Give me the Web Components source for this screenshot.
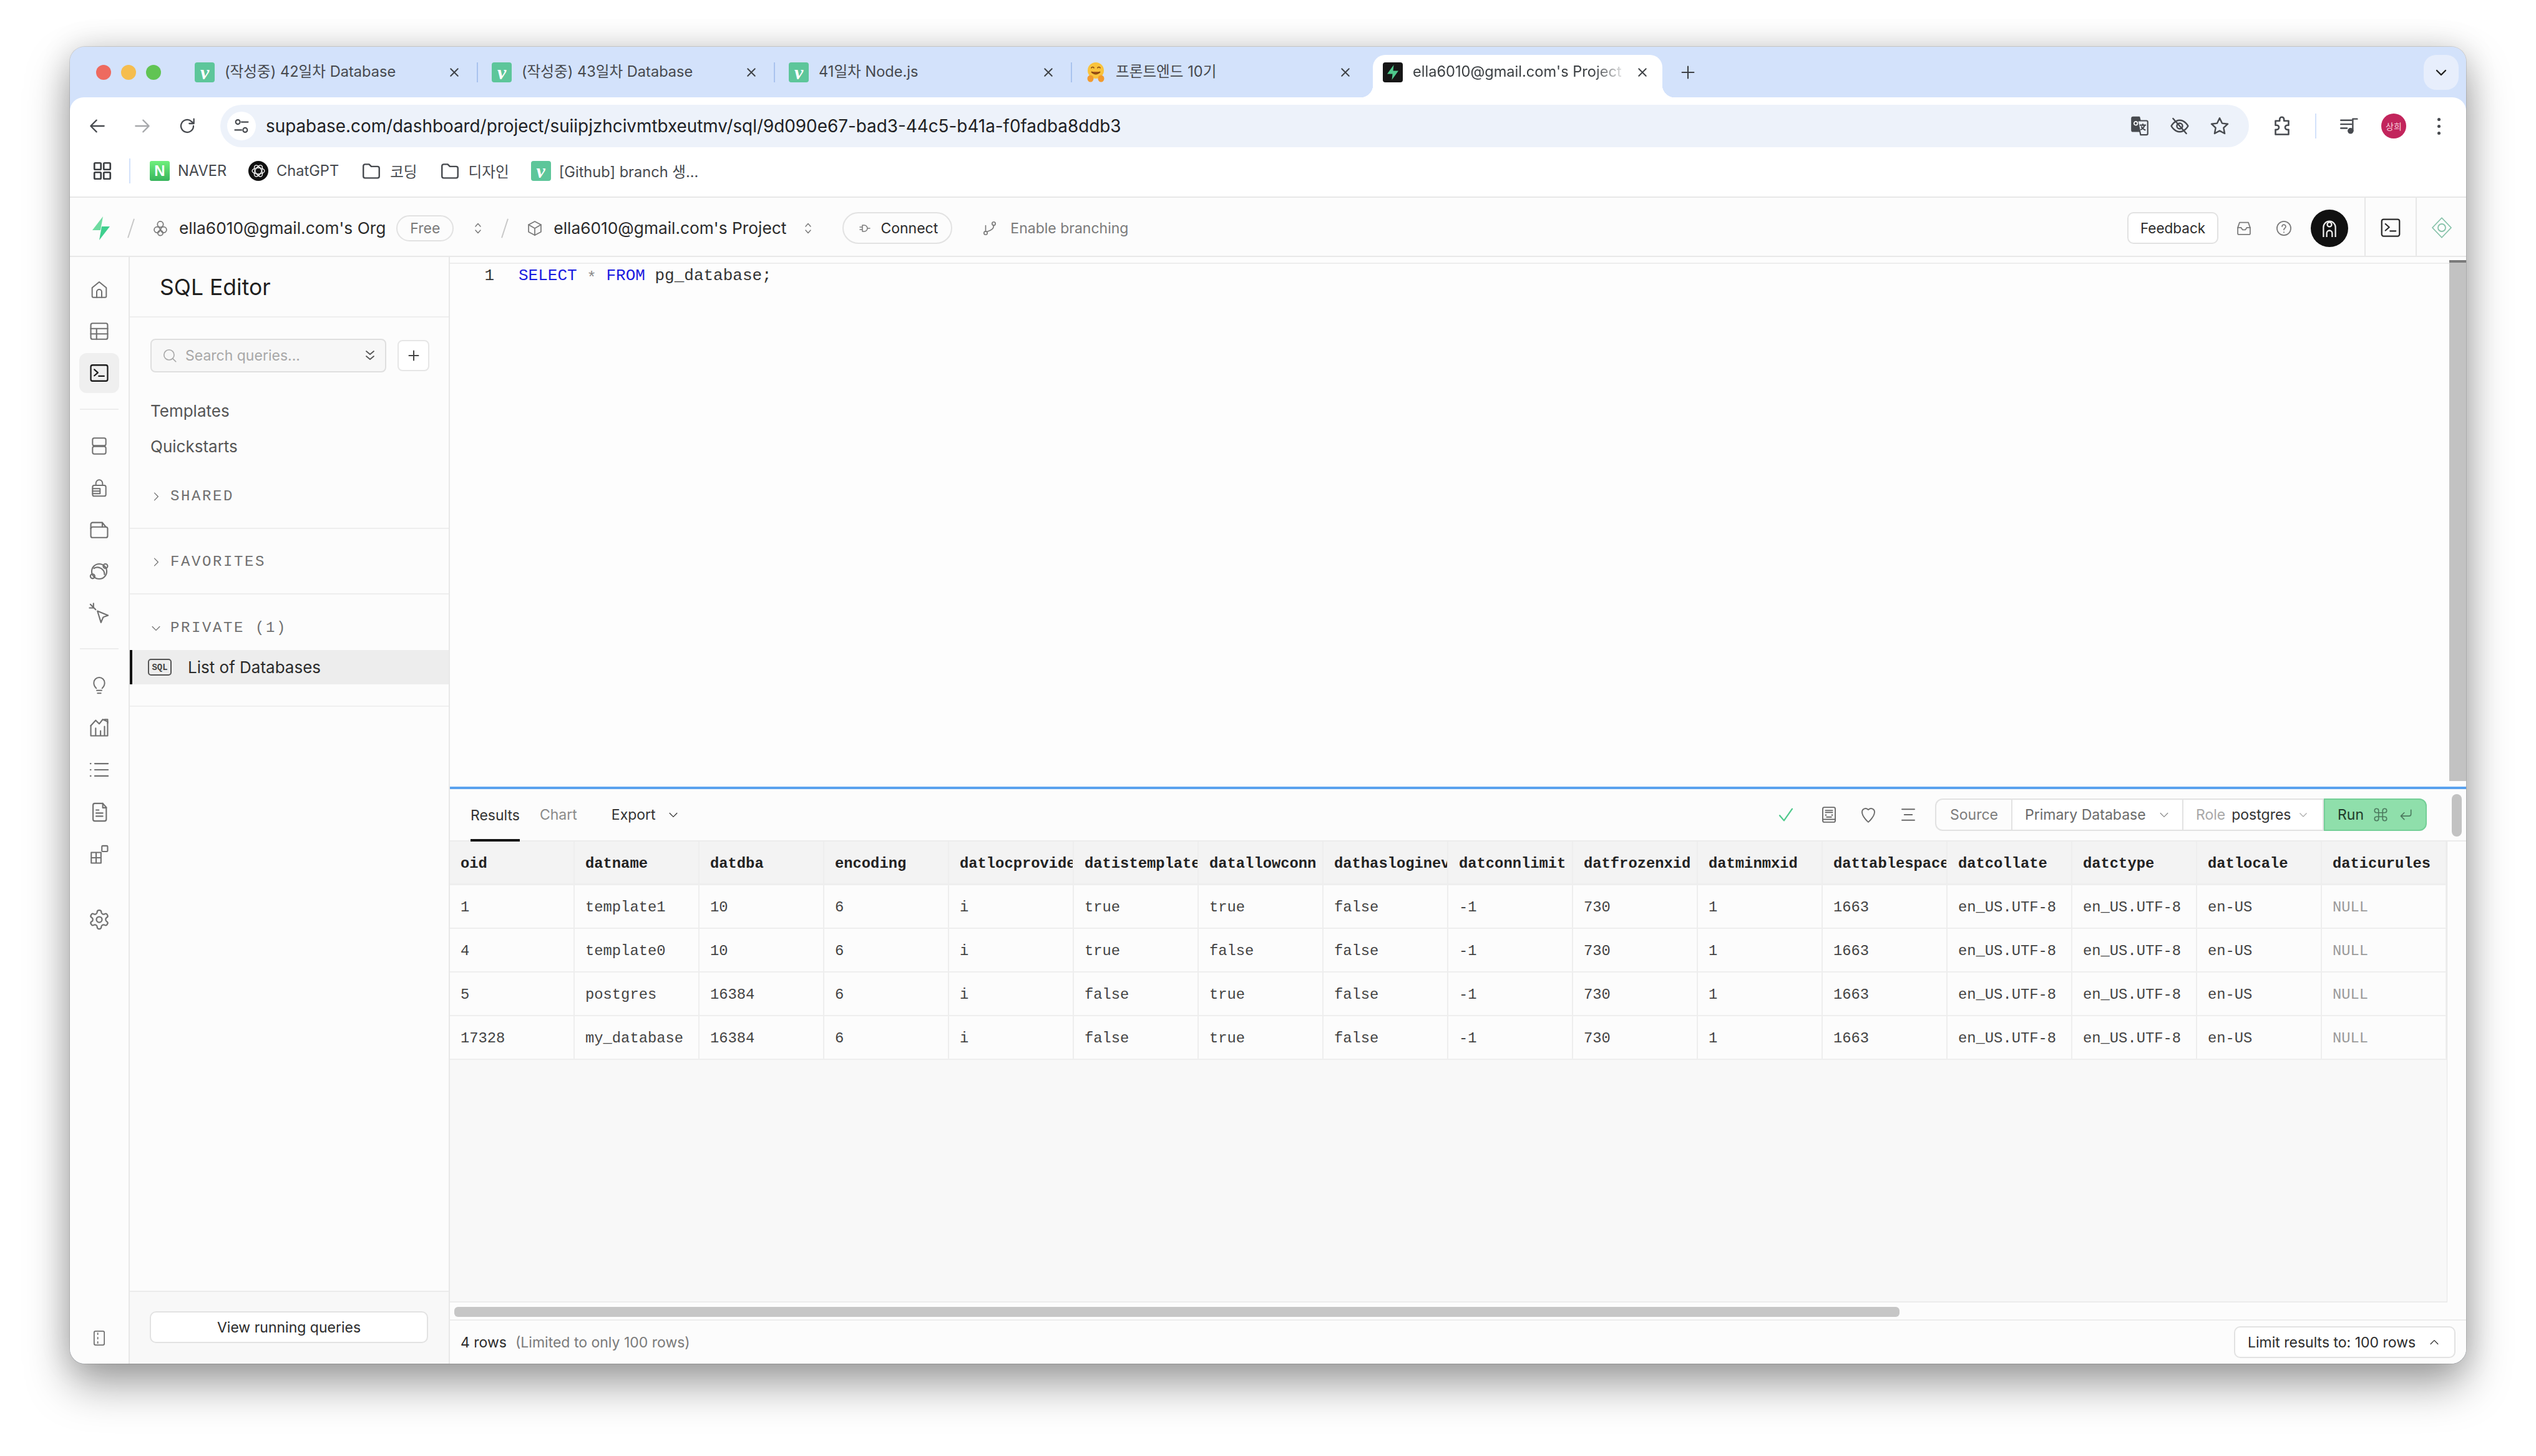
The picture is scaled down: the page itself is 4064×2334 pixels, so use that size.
<!DOCTYPE html>
<html lang="ko">
<head>
<meta charset="utf-8">
<title>SQL Editor</title>
<style>
  html, body { margin: 0; background: #fff; }
  body { font-family: Inter, "Noto Sans CJK KR", sans-serif; }
</style>
</head>
<body>
<browser-window>
  <chrome-tabs></chrome-tabs>
  <chrome-toolbar></chrome-toolbar>
  <chrome-bookmarks></chrome-bookmarks>
  <dash-header></dash-header>
  <dash-body>
    <icon-rail></icon-rail>
    <query-sidebar></query-sidebar>
    <sql-workspace>
      <sql-editor></sql-editor>
      <results-toolbar></results-toolbar>
      <result-grid></result-grid>
      <results-footer></results-footer>
    </sql-workspace>
  </dash-body>
</browser-window>

<script>
// ICONS
// stroke icons on a 24 box, they take their colour from the element
const ICONS = {
  home: '<path d="M3.5 10 12 3l8.500 7v10a1.500 1.500 0 0 1-1.500 1.500H5A1.500 1.500 0 0 1 3.500 20z"/><path d="M9 21.500V15a3 3 0 0 1 6 0v6.500"/>',
  table: '<rect x="2.500" y="3" width="19" height="18" rx="2"/><path d="M2.500 9h19M2.500 15h19M9 9v12"/>',
  terminal: '<rect x="2.500" y="3" width="19" height="18" rx="2"/><path d="m6.500 8 4 3.500-4 3.500M11.500 15.500h6"/>',
  database: '<rect x="4" y="2.500" width="16" height="9" rx="2"/><rect x="4" y="12.500" width="16" height="9" rx="2"/>',
  lock: '<path d="M8 9V6.500a4 4 0 0 1 8 0V9"/><rect x="4" y="9" width="16" height="13" rx="2"/><path d="M4 13h9v6H4M4 16h9"/>',
  storage: '<path d="M2.500 11a2 2 0 0 1 2-2h15a2 2 0 0 1 2 2v8a2 2 0 0 1-2 2h-15a2 2 0 0 1-2-2z"/><path d="M2.500 11V6a2 2 0 0 1 2-2h11l4 5M15.500 4v5"/>',
  realtime: '<circle cx="12" cy="12" r="8.500"/><path d="M6 8.500a8 8 0 0 1 12 7"/><circle cx="19" cy="6" r="2.500"/><circle cx="4.500" cy="17.500" r="2.500"/>',
  cursor: '<path d="m10 9.500 12 5-5.500 2-2.500 6z"/><path d="M2 2l6 6M5.500 1v4M1 6h4"/>',
  bulb: '<path d="M8.500 16C6.500 14 5.500 12 5.500 9.500a6.500 6.500 0 0 1 13 0c0 2.500-1 4.500-3 6.500"/><path d="M9 18.500h6M10 22h4"/>',
  chart: '<path d="M2.500 10 8 4l4 4 4-5 5.500 2.500M18 3h3.500v4"/><path d="M2.500 10v11.500h19V5.500M8 13v8.500M13.500 16v5.500M18 11v10.500"/>',
  list: '<path d="M7 5h15M7 12h15M7 19h15M2 5h.5M2 12h.5M2 19h.5"/>',
  doc: '<path d="M5 4a2 2 0 0 1 2-2h9l4 4.500V20a2 2 0 0 1-2 2H7a2 2 0 0 1-2-2z"/><path d="M16 2v5h4M8.500 9.500h3M8.500 13h7.500M8.500 16.500h7.500"/>',
  apps: '<path d="M3 9.500h11v12H3zM3 15.500h11M8.500 9.500v12"/><rect x="15" y="2" width="6.500" height="6.500" rx="1"/>',
  gear: '<path d="M12.220 2h-.440a2 2 0 0 0-2 2v.180a2 2 0 0 1-1 1.730l-.430.250a2 2 0 0 1-2 0l-.150-.080a2 2 0 0 0-2.730.730l-.220.380a2 2 0 0 0 .730 2.730l.150.100a2 2 0 0 1 1 1.720v.510a2 2 0 0 1-1 1.740l-.150.090a2 2 0 0 0-.730 2.730l.220.380a2 2 0 0 0 2.730.730l.150-.080a2 2 0 0 1 2 0l.430.250a2 2 0 0 1 1 1.730V20a2 2 0 0 0 2 2h.440a2 2 0 0 0 2-2v-.180a2 2 0 0 1 1-1.730l.430-.250a2 2 0 0 1 2 0l.150.080a2 2 0 0 0 2.730-.730l.220-.390a2 2 0 0 0-.730-2.730l-.150-.080a2 2 0 0 1-1-1.740v-.500a2 2 0 0 1 1-1.740l.150-.090a2 2 0 0 0 .730-2.730l-.220-.380a2 2 0 0 0-2.730-.730l-.150.080a2 2 0 0 1-2 0l-.430-.250a2 2 0 0 1-1-1.730V4a2 2 0 0 0-2-2z"/><circle cx="12" cy="12" r="3"/>',
  panel: '<rect x="5" y="2.500" width="14" height="19" rx="2"/><path d="M10 5v2M10 11v2M10 17v2"/>',
  search: '<circle cx="11" cy="11" r="7.500"/><path d="m21 21-4.500-4.500"/>',
  chevrons: '<path d="m6 5 6 5 6-5M6 13l6 5 6-5"/>',
  plus: '<path d="M12 4.500v15M4.500 12h15"/>',
  right: '<path d="m9 5 7 7-7 7"/>',
  down: '<path d="m5 9 7 7 7-7"/>',
  up: '<path d="m5 15 7-7 7 7"/>',
  updown: '<path d="m8 9 4-4.500L16 9M8 15l4 4.500 4-4.500"/>',
  back: '<path d="M20 12H4.500M11 5l-7 7 7 7"/>',
  forward: '<path d="M4 12h15.500M13 5l7 7-7 7"/>',
  reload: '<path d="M19.500 12a7.500 7.500 0 1 1-2.500-5.600L20 9M20 3.500V9h-5.500"/>',
  tune: '<circle cx="7" cy="6.500" r="3"/><path d="M12 6.500h9M3 17.500h9"/><circle cx="17" cy="17.500" r="3"/>',
  translate: '<path d="M3 3.500A1.500 1.500 0 0 1 4.500 2h7l4 16H4.500A1.500 1.500 0 0 1 3 16.500z" fill="currentColor"/><path d="M9.500 6h10A1.500 1.500 0 0 1 21 7.500v13a1.500 1.500 0 0 1-1.500 1.500H13l-3.500-16z" fill="#edf2fa"/><path d="M12.500 11h6M15.500 10v1M17.500 11c-.5 2-2 4-4 5M14 13c.7 1.300 2.500 3 4 3.500"/><circle cx="7.500" cy="9" r="2" stroke="#fff" stroke-width="1.200"/>',
  star: '<path d="m12 3 2.800 5.900 6.400.800-4.700 4.400 1.200 6.400L12 17.400l-5.700 3.100 1.200-6.400L2.800 9.700l6.400-.800z"/>',
  eyeoff: '<path d="M2.500 12S6 5.500 12 5.500 21.500 12 21.500 12 18 18.500 12 18.500 2.500 12 2.500 12z"/><circle cx="12" cy="12" r="3.200"/><path d="m4.500 3.500 15 17"/>',
  puzzle: '<path d="M5 6.500h4.500V4.800a2.300 2.300 0 0 1 4.600 0v1.700H19v4.600h-1.300a2.400 2.400 0 0 0 0 4.800H19v5.100H5v-5.100h1.300a2.400 2.400 0 0 0 0-4.800H5z"/>',
  media: '<path d="M3 5.500h12M3 10h12M3 14.500h7"/><path d="M16.500 17.500V4h5"/><circle cx="14" cy="17.500" r="2.500" fill="currentColor"/>',
  grid: '<rect x="3.500" y="3.500" width="7" height="7" rx="1"/><rect x="13.500" y="3.500" width="7" height="7" rx="1"/><rect x="3.500" y="13.500" width="7" height="7" rx="1"/><rect x="13.500" y="13.500" width="7" height="7" rx="1"/>',
  folder: '<path d="M3 6.500a2 2 0 0 1 2-2h4.500l2.500 2.500h7a2 2 0 0 1 2 2V18a2 2 0 0 1-2 2H5a2 2 0 0 1-2-2z"/>',
  org: '<circle cx="12" cy="6.500" r="4"/><circle cx="7.500" cy="14" r="4"/><circle cx="16.500" cy="14" r="4"/><circle cx="12" cy="18.500" r="3.500"/>',
  box: '<path d="M12 2.500 20.500 7v10L12 21.500 3.500 17V7z"/><path d="M3.500 7 12 12l8.500-5M12 12v9.500"/>',
  plug: '<path d="M9 7v10h3a5 5 0 0 0 0-10zM9 10H5M9 14H5M17 12h4"/>',
  branch: '<circle cx="18" cy="5" r="2.500"/><circle cx="6" cy="19" r="2.500"/><path d="M6 16.500V8M18 7.500c0 6-5 7.500-10 9.500"/>',
  inbox: '<path d="M3.500 11 6 4h12l2.500 7v8a1.500 1.500 0 0 1-1.500 1.500H5A1.500 1.500 0 0 1 3.500 19z"/><path d="M3.500 11H8l2 3h4l2-3h4.500"/>',
  help: '<circle cx="12" cy="12" r="9.500"/><path d="M9.500 9.500a2.500 2.500 0 1 1 4 2c-1 .7-1.500 1.200-1.500 2.500M12 17.200v.3"/>',
  diamond: '<path d="M12 1.500 22 12 12 22.500 2 12z"/><circle cx="12" cy="12" r="4"/>',
  check: '<path d="m4 13 5.500 6.500L20 4.500"/>',
  keyboard: '<rect x="4" y="2.500" width="16" height="19" rx="2"/><path d="M7.500 6.500h9M7.500 9h9M9 15h6M4 18h16M8 12v1M16 12v1"/>',
  heart: '<path d="M12 21.500S4 14.500 4 8.500a4.500 4.500 0 0 1 8-2.800 4.500 4.500 0 0 1 8 2.800c0 6-8 13-8 13z"/>',
  lines: '<path d="M4 5h16M7 12h10M4 19h16"/>',
  enter: '<path d="M20 5v6a3 3 0 0 1-3 3H5M10 9l-5 5 5 5"/>',
  cmd: '<path d="M9 9h6v6H9zM9 9V6a3 3 0 1 0-3 3zM15 9V6a3 3 0 1 1 3 3zM9 15v3a3 3 0 1 1-3-3zM15 15v3a3 3 0 1 0 3-3z"/>',
};

// every element here gets its markup the same way
const define = (tag, html) => {
  customElements.define(tag, class extends HTMLElement {
    constructor() {
      super();
      this.attachShadow({ mode: 'open' }).innerHTML = html;
    }
  });
};

class UiIcon extends HTMLElement {
  connectedCallback() {
    const size = this.getAttribute('size') || 24;
    const weight = this.getAttribute('weight') || 1.500;
    this.attachShadow({ mode: 'open' }).innerHTML = `
      <style>:host { display: inline-flex; flex: none; line-height: 0; }</style>
      <svg width="${size}" height="${size}" viewBox="0 0 24 24" fill="none" stroke="currentColor"
        stroke-width="${weight}" stroke-linecap="round" stroke-linejoin="round">${ICONS[this.getAttribute('name')]}</svg>`;
  }
}
customElements.define('ui-icon', UiIcon);

// WINDOW
define('browser-window', `
<style>
  :host { display: block; box-sizing: border-box; width: 4064px; height: 2334px; padding: 75px 112px 148px; overflow: hidden; }
  .frame { display: flex; flex-direction: column; height: 100%; background: #d3e2fb; border-radius: 24px;
    box-shadow: 0 0 0 1px rgba(0,0,0,.12), 0 34px 70px rgba(0,0,0,.36), 0 0 50px rgba(0,0,0,.14); overflow: hidden; }
</style>
<div class="frame"><slot></slot></div>`);

// FAVICONS
define('fav-vue', `
<style>
  :host { display: inline-flex; flex: none; width: 32px; height: 32px; border-radius: 4px; background: #5dc69a;
    align-items: center; justify-content: center; color: #fff;
    font: italic bold 32px/30px "Liberation Serif", serif; }
</style><span>v</span>`);

define('fav-naver', `
<style>
  :host { display: inline-flex; flex: none; width: 32px; height: 32px; border-radius: 3px;
    background: linear-gradient(#6ff07c, #37b45c); align-items: center; justify-content: center; color: #fff;
    font: bold 24px/32px "Liberation Sans", sans-serif; }
</style><span>N</span>`);

define('fav-gpt', `
<style>
  :host { display: inline-flex; flex: none; line-height: 0; }
</style>
<svg width="32" height="32" viewBox="0 0 32 32" fill="none" stroke="#fff" stroke-width="1.300">
  <circle cx="16" cy="16" r="16" fill="#111" stroke="none"/>
  <ellipse cx="16" cy="16" rx="10" ry="5"/>
  <ellipse cx="16" cy="16" rx="10" ry="5" transform="rotate(60 16 16)"/>
  <ellipse cx="16" cy="16" rx="10" ry="5" transform="rotate(120 16 16)"/>
</svg>`);

define('fav-supabase', `
<style>
  :host { display: inline-flex; flex: none; line-height: 0; }
</style>
<svg width="32" height="32" viewBox="0 0 32 32">
  <rect width="32" height="32" rx="4" fill="#161616"/>
  <path d="M17.500 4 7 18.500h8.500L14.500 28 25 13.500h-8.500z" fill="#4fc98c"/>
</svg>`);

define('fav-hug', `
<style>
  :host { display: inline-flex; flex: none; line-height: 0; }
</style>
<svg width="32" height="32" viewBox="0 0 32 32">
  <circle cx="16" cy="13" r="13" fill="#f9c33d"/>
  <path d="M9 9.500a2 2 0 0 1 4 0M19 9.500a2 2 0 0 1 4 0" stroke="#8a4a12" stroke-width="1.600" fill="none"/>
  <path d="M9 15q7 7 14 0" stroke="#8a4a12" stroke-width="1.800" fill="#a5561a"/>
  <ellipse cx="7.500" cy="26" rx="5" ry="5.500" fill="#f29a2e"/>
  <ellipse cx="24.500" cy="26" rx="5" ry="5.500" fill="#f29a2e"/>
</svg>`);

// TAB STRIP
customElements.define('browser-tab', class extends HTMLElement {
  constructor() {
    super();
    this.attachShadow({ mode: 'open' }).innerHTML = `
    <style>
      :host { display: flex; position: relative; box-sizing: border-box; flex: none; width: 476px; height: 68px;
        align-items: center; padding: 0 22px 12px; color: #46494e; font-size: 23.600px; }
      :host([sep])::after { content: ""; position: absolute; right: 0; top: 12px; width: 2px; height: 32px; background: #a9c3ee; }
      :host([active]) { color: #3c4043; }
      :host([active]) .bg { display: block; }
      .bg { display: none; position: absolute; left: 6px; right: 6px; top: 0; bottom: 0; background: #fff; border-radius: 20px 20px 0 0; }
      .bg::before, .bg::after { content: ""; position: absolute; bottom: 0; width: 20px; height: 20px; }
      .bg::before { left: -20px; background: radial-gradient(circle at 0 0, transparent 20px, #fff 20.5px); }
      .bg::after { right: -20px; background: radial-gradient(circle at 100% 0, transparent 20px, #fff 20.5px); }
      ::slotted([slot=icon]) { position: relative; }
      .title { position: relative; flex: 1; margin-left: 16px; white-space: nowrap; overflow: hidden; line-height: 30px; padding-bottom: 3px; }
      :host([active]) .title { margin-right: 8px; -webkit-mask-image: linear-gradient(90deg, #000 84%, transparent); mask-image: linear-gradient(90deg, #000 84%, transparent); }
      .close { position: relative; width: 32px; display: flex; justify-content: center; color: #3e4145; }
    </style>
    <div class="bg"></div>
    <slot name="icon"></slot>
    <div class="title"><slot></slot></div>
    <div class="close"><ui-icon name="plus" size="26" weight="1.800" style="transform: rotate(45deg)"></ui-icon></div>`;
  }
});

define('chrome-tabs', `
<style>
  :host { display: flex; flex: none; height: 81px; box-sizing: border-box; padding: 13px 12px 0 178px; align-items: flex-start; background: #d3e2fb; position: relative; }
  .lights { position: absolute; left: 42px; top: 29px; display: flex; gap: 16px; }
  .lights i { width: 24px; height: 24px; border-radius: 50%; }
  .add { margin: 13px 0 0 20px; color: #3e4145; }
  .more { margin-left: auto; width: 56px; height: 56px; border-radius: 20px; background: #e7eefc; display: flex; align-items: center; justify-content: center; color: #222; }
</style>
<div class="lights"><i style="background:#ee6a5f"></i><i style="background:#f5bd4f"></i><i style="background:#61c454"></i></div>
<browser-tab sep><fav-vue slot="icon"></fav-vue>(작성중) 42일차 Database</browser-tab>
<browser-tab sep><fav-vue slot="icon"></fav-vue>(작성중) 43일차 Database</browser-tab>
<browser-tab sep><fav-vue slot="icon"></fav-vue>41일차 Node.js</browser-tab>
<browser-tab><fav-hug slot="icon"></fav-hug>프론트엔드 10기</browser-tab>
<browser-tab active><fav-supabase slot="icon"></fav-supabase>ella6010@gmail.com's Project</browser-tab>
<div class="add"><ui-icon name="plus" size="30" weight="1.700"></ui-icon></div>
<div class="more"><ui-icon name="down" size="24" weight="2.400"></ui-icon></div>`);

// ADDRESS BAR
define('chrome-toolbar', `
<style>
  :host { display: flex; flex: none; box-sizing: border-box; height: 80px; padding: 12px 0 0 8px; align-items: center; background: #fff; border-radius: 22px 22px 0 0; color: #474a4f; }
  .btn { flex: none; width: 72px; display: flex; justify-content: center; }
  .btn.off { color: #a6a8ab; }
  .omni { flex: none; box-sizing: border-box; width: 3251px; height: 68px; margin-left: 17px; border-radius: 34px; background: #edf2fa;
    display: flex; align-items: center; padding: 0 15px 0 11px; }
  .site { width: 46px; height: 46px; border-radius: 50%; background: #fff; display: flex; align-items: center; justify-content: center; }
  .url { margin-left: 16px; margin-right: auto; font-size: 27.850px; color: #202124; white-space: nowrap; }
  .side { width: 64px; display: flex; justify-content: center; }
  .sep { flex: none; width: 2px; height: 40px; background: #d3e2fb; }
  .avatar { flex: none; width: 40px; height: 40px; border-radius: 50%; background: #c2255c; color: #f7cfdc; font-size: 14px; display: flex; align-items: center; justify-content: center; margin-right: 16px; }
  .dots { flex: none; width: 72px; display: flex; flex-direction: column; align-items: center; gap: 6px; }
  .dots i { width: 5px; height: 5px; border-radius: 50%; background: #474a4f; }
</style>
<div class="btn"><ui-icon name="back" size="32" weight="1.700"></ui-icon></div>
<div class="btn off"><ui-icon name="forward" size="32" weight="1.700"></ui-icon></div>
<div class="btn"><ui-icon name="reload" size="32" weight="1.700"></ui-icon></div>
<div class="omni">
  <div class="site"><ui-icon name="tune" size="28" weight="1.800"></ui-icon></div>
  <div class="url">supabase.com/dashboard/project/suiipjzhcivmtbxeutmv/sql/9d090e67-bad3-44c5-b41a-f0fadba8ddb3</div>
  <div class="side"><ui-icon name="translate" size="34" weight="1.500"></ui-icon></div>
  <div class="side"><ui-icon name="eyeoff" size="34" weight="1.700"></ui-icon></div>
  <div class="side"><ui-icon name="star" size="34" weight="1.700"></ui-icon></div>
</div>
<div class="btn" style="width:106px"><ui-icon name="puzzle" size="36" weight="1.700"></ui-icon></div>
<div class="sep"></div>
<div class="btn" style="width:104px"><ui-icon name="media" size="34" weight="1.700"></ui-icon></div>
<div class="avatar">상희</div>
<div class="dots"><i></i><i></i><i></i></div>`);

// BOOKMARKS
define('chrome-bookmarks', `
<style>
  :host { display: flex; flex: none; box-sizing: border-box; height: 81px; align-items: center; gap: 35px; padding: 0 0 4px 34px; background: #fff; border-bottom: 2px solid #e8e8e8; color: #46494e; font-size: 23.600px; }
  .mark { display: flex; align-items: center; gap: 13px; white-space: nowrap; }
  .apps { display: flex; align-items: center; gap: 25px; margin-right: -4px; color: #3d4043; }
  .apps i { width: 2px; height: 40px; background: #d3e2fb; }
</style>
<div class="apps"><ui-icon name="grid" size="36" weight="1.800"></ui-icon><i></i></div>
<div class="mark"><fav-naver></fav-naver>NAVER</div>
<div class="mark"><fav-gpt></fav-gpt>ChatGPT</div>
<div class="mark"><ui-icon name="folder" size="34" weight="1.700"></ui-icon>코딩</div>
<div class="mark"><ui-icon name="folder" size="34" weight="1.700"></ui-icon>디자인</div>
<div class="mark"><fav-vue></fav-vue>[Github] branch 생...</div>`);

// DASHBOARD HEADER
define('dash-header', `
<style>
  :host { display: flex; flex: none; box-sizing: border-box; height: 95px; align-items: center; background: #fcfcfc; border-bottom: 2px solid #e8e8e8; color: #2b2b2b; font-size: 26.300px; padding: 0 0 0 34px; white-space: nowrap; }
  .slash { width: 2px; height: 32px; background: #c8c8c8; transform: rotate(18deg); flex: none; }
  .mute { color: #7a7a7a; }
  .pill { display: flex; align-items: center; justify-content: center; box-sizing: border-box; border: 2px solid #e2e2e2; border-radius: 26px; font-size: 23px; }
  .up { position: relative; top: 2px; }
  .btn { margin-left: auto; display: flex; align-items: center; justify-content: center; box-sizing: border-box; width: 146px; height: 51px; border: 2px solid #e2e2e2; border-radius: 10px; background: #fff; font-size: 22.500px; }
  .ava { width: 60px; height: 60px; border-radius: 50%; background: #111; color: #eee; display: flex; align-items: center; justify-content: center; }
  .cell { align-self: stretch; width: 81px; border-left: 2px solid #e8e8e8; box-sizing: border-box; display: flex; align-items: center; justify-content: center; padding-top: 3px; }
</style>
<svg class="up" width="32" height="40" viewBox="0 0 32 40" style="flex:none"><path d="M19 1 2 23h13z" fill="#6edba0"/><path d="M13 39 30 17H17z" fill="#3ecf8e"/></svg>
<div class="slash up" style="margin-left:31px"></div>
<ui-icon class="mute up" name="org" size="28" style="margin-left:32px"></ui-icon>
<span class="up" style="margin-left:16px">ella6010@gmail.com's Org</span>
<div class="pill mute up" style="width:92px;height:42px;margin-left:17px;">Free</div>
<ui-icon class="mute up" name="updown" size="24" style="margin-left:27px"></ui-icon>
<div class="slash up" style="margin-left:30px"></div>
<ui-icon class="mute up" name="box" size="28" style="margin-left:33px"></ui-icon>
<span class="up" style="margin-left:16px">ella6010@gmail.com's Project</span>
<ui-icon class="mute up" name="updown" size="24" style="margin-left:23px"></ui-icon>
<div class="pill up" style="width:176px;height:51px;margin-left:43px;gap:14px"><ui-icon class="mute" name="plug" size="24"></ui-icon>Connect</div>
<ui-icon class="mute up" name="branch" size="26" style="margin-left:47px"></ui-icon>
<span class="mute up" style="margin-left:20px;font-size:23px">Enable branching</span>
<div class="btn up">Feedback</div>
<ui-icon class="mute up" name="inbox" size="28" style="margin-left:27px"></ui-icon>
<ui-icon class="mute up" name="help" size="28" style="margin-left:36px"></ui-icon>
<div class="ava up" style="margin-left:29px"><svg width="42" height="42" viewBox="0 0 24 24" fill="none" stroke="currentColor" stroke-width="1.300"><circle cx="12" cy="8.500" r="2"/><path d="M6.500 20v-9a5.500 5.500 0 0 1 11 0v9M9.500 20v-3.500a2.500 2.500 0 0 1 5 0V20"/></svg></div>
<div class="cell" style="margin-left:26px;width:82px"><ui-icon name="terminal" size="36" weight="1.500"></ui-icon></div>
<div class="cell" style="color:#86c2a9"><ui-icon name="diamond" size="36" weight="1.200"></ui-icon></div>`);

// MAIN AREA
define('dash-body', `
<style>
  :host { display: flex; flex: 1; min-height: 0; background: #fcfcfc; border-radius: 0 0 24px 24px; overflow: hidden; }
</style>
<slot></slot>`);

define('rail-item', `
<style>
  :host { display: flex; flex: none; height: 67px; align-items: center; justify-content: center; color: #707070; }
  :host([active]) { color: #1c1c1c; }
  :host([active]) .chip { background: #efefef; }
  .chip { width: 64px; height: 64px; border-radius: 12px; display: flex; align-items: center; justify-content: center; }
</style>
<div class="chip"><slot></slot></div>`);

define('rail-line', `
<style>
  :host { display: flex; flex: none; height: 50px; align-items: center; justify-content: center; }
  i { display: block; width: 62px; height: 2px; background: #ededed; }
</style><i></i>`);

define('icon-rail', `
<style>
  :host { display: flex; flex-direction: column; flex: none; box-sizing: border-box; width: 96px; padding-top: 18px; background: #fcfcfc; border-right: 2px solid #e8e8e8; }
  rail-item.tall { height: 68px; }
  .foot { margin-top: auto; padding-bottom: 8px; }
</style>
<rail-item><ui-icon name="home" size="32"></ui-icon></rail-item>
<rail-item><ui-icon name="table" size="34"></ui-icon></rail-item>
<rail-item active><ui-icon name="terminal" size="34" weight="1.600"></ui-icon></rail-item>
<rail-line></rail-line>
<rail-item><ui-icon name="database" size="32"></ui-icon></rail-item>
<rail-item><ui-icon name="lock" size="32"></ui-icon></rail-item>
<rail-item><ui-icon name="storage" size="34"></ui-icon></rail-item>
<rail-item><ui-icon name="realtime" size="34"></ui-icon></rail-item>
<rail-item><ui-icon name="cursor" size="34"></ui-icon></rail-item>
<rail-line style="height:48px"></rail-line>
<rail-item class="tall"><ui-icon name="bulb" size="32"></ui-icon></rail-item>
<rail-item class="tall"><ui-icon name="chart" size="34"></ui-icon></rail-item>
<rail-item class="tall"><ui-icon name="list" size="34"></ui-icon></rail-item>
<rail-item class="tall"><ui-icon name="doc" size="34"></ui-icon></rail-item>
<rail-item class="tall"><ui-icon name="apps" size="34"></ui-icon></rail-item>
<rail-item style="margin-top:36px"><ui-icon name="gear" size="36"></ui-icon></rail-item>
<div class="foot"><rail-item><ui-icon name="panel" size="28"></ui-icon></rail-item></div>`);

// SIDEBAR
define('side-section', `
<style>
  :host { display: flex; flex: none; box-sizing: border-box; height: 104px; align-items: center; padding: 2px 0 0 32px; gap: 13px; border-bottom: 2px solid #eeeeee; color: #707070; font: 24px/1 "Liberation Mono", monospace; letter-spacing: 2.600px; }
  :host([open]) { height: 89px; border-bottom: 0; padding-top: 19px; }
</style>
<slot></slot>`);

define('query-sidebar', `
<style>
  :host { display: flex; flex-direction: column; flex: none; box-sizing: border-box; width: 513px; background: #fcfcfc; border-right: 2px solid #e8e8e8; color: #555; font-size: 26px; }
  .title { box-sizing: border-box; height: 97px; display: flex; align-items: center; padding: 2px 0 0 48px; font-size: 35.500px; color: #1f1f1f; border-bottom: 2px solid #eeeeee; }
  .tools { display: flex; align-items: center; gap: 18px; padding: 34px 0 33px 33px; }
  .search { box-sizing: border-box; width: 378px; height: 54px; border: 2px solid #dfdfdf; border-radius: 8px; background: #f7f7f7; display: flex; align-items: center; padding: 0 12px 0 16px; color: #a8a8a8; font-size: 23px; gap: 12px; }
  .search span { flex: 1; }
  .search ui-icon:last-child { color: #555; }
  .add { box-sizing: border-box; width: 51px; height: 50px; border: 2px solid #e6e6e6; border-radius: 8px; background: #fff; display: flex; align-items: center; justify-content: center; color: #444; }
  .link { height: 57px; line-height: 57px; padding-left: 33px; }
  .row { display: flex; align-items: center; box-sizing: border-box; height: 55px; background: #ededed; border-left: 4px solid #111; padding-left: 25px; gap: 26px; color: #2b2b2b; }
  .sql { box-sizing: border-box; width: 38px; height: 27px; border: 2px solid #555; border-radius: 5px; display: flex; align-items: center; justify-content: center; font: bold 14px/1 "Liberation Mono", monospace; color: #444; }
  .pad { height: 34px; flex: none; border-bottom: 2px solid #f0f0f0; }
  .foot { margin-top: auto; box-sizing: border-box; height: 117px; border-top: 2px solid #ebebeb; background: #f8f8f8; padding: 31px 32px 0; }
  .foot div { box-sizing: border-box; width: 446px; height: 51px; border: 2px solid #e2e2e2; border-radius: 10px; background: #fff; display: flex; align-items: center; justify-content: center; color: #2b2b2b; font-size: 23px; }
</style>
<div class="title">SQL Editor</div>
<div class="tools">
  <div class="search"><ui-icon name="search" size="26"></ui-icon><span>Search queries...</span><ui-icon name="chevrons" size="24" weight="1.800"></ui-icon></div>
  <div class="add"><ui-icon name="plus" size="24" weight="2"></ui-icon></div>
</div>
<div class="link">Templates</div>
<div class="link">Quickstarts</div>
<side-section><ui-icon name="right" size="20"></ui-icon>SHARED</side-section>
<side-section style="height:105px"><ui-icon name="right" size="20"></ui-icon>FAVORITES</side-section>
<side-section open><ui-icon name="down" size="20"></ui-icon>PRIVATE (1)</side-section>
<div class="row"><div class="sql">SQL</div>List of Databases</div>
<div class="pad"></div>
<div class="foot"><div>View running queries</div></div>`);

// EDITOR + RESULTS
define('sql-workspace', `
<style>
  :host { display: flex; flex-direction: column; flex: 1; min-width: 0; background: #fcfcfc; }
</style>
<slot></slot>`);

define('sql-editor', `
<style>
  :host { display: flex; flex: none; height: 849px; border-bottom: 4px solid #5aa2ee; box-sizing: content-box; background: #fdfdfd; }
  .code { flex: 1; }
  .strip { height: 9px; border-bottom: 2px solid #ededed; }
  .line { display: flex; height: 36px; margin-top: 1px; align-items: center; font: 26px/36px "Liberation Mono", monospace; color: #333; }
  .num { width: 71px; text-align: right; color: #333; margin-right: 39px; }
  b { font-weight: normal; color: #1a1ae0; }
  em { font-style: normal; color: #8a8a8a; display: inline-block; transform: translateY(4px); }
  .bar { width: 27px; background: #c2c2c2; position: relative; margin: 5px 0 9px; }
  .bar::before { content: ""; position: absolute; left: 0; right: 0; top: 0; height: 4px; background: #7a7a7a; }
</style>
<div class="code">
  <div class="strip"></div>
  <div class="line"><div class="num">1</div><div><b>SELECT</b> <em>*</em> <b>FROM</b> pg_database;</div></div>
</div>
<div class="bar"></div>`);

define('results-toolbar', `
<style>
  :host { display: flex; flex: none; box-sizing: border-box; height: 84px; align-items: stretch; padding-left: 33px; border-bottom: 2px solid #ececec; font-size: 23px; color: #333; white-space: nowrap; }
  .tab { display: flex; align-items: center; border-bottom: 4px solid transparent; padding-top: 4px; }
  .tab.on { border-color: #111; margin-bottom: -2px; }
  .tab.off { color: #8a8a8a; margin-left: 32px; }
  .export { display: flex; align-items: center; margin-left: 55px; gap: 18px; }
  .tools { margin-left: auto; display: flex; align-items: center; color: #6a6a6a; }
  .group { display: flex; height: 52px; margin-right: 63px; margin-left: 28px; box-sizing: border-box; }
  .seg { display: flex; align-items: center; box-sizing: border-box; border: 2px solid #e2e2e2; border-left: 0; background: #fff; padding: 0 20px; gap: 10px; }
  .seg:first-child { border-left: 2px solid #e2e2e2; border-radius: 12px 0 0 12px; color: #7d7d7d; background: #fcfcfc; width: 124px; padding: 0 0 0 22px; }
  .run { display: flex; align-items: center; box-sizing: border-box; width: 165px; background: #8fdfab; border: 2px solid #74cf97; border-radius: 0 12px 12px 0; padding-left: 20px; gap: 14px; color: #1f3a2a; }
  .run ui-icon { color: #4c7a5e; }
</style>
<div class="tab on">Results</div>
<div class="tab off">Chart</div>
<div class="export">Export<ui-icon name="down" size="20"></ui-icon></div>
<div class="tools">
  <ui-icon name="check" size="30" weight="1.800" style="color:#4fc98c"></ui-icon>
  <ui-icon name="keyboard" size="30" style="margin-left:39px"></ui-icon>
  <ui-icon name="heart" size="30" style="margin-left:33px"></ui-icon>
  <ui-icon name="lines" size="30" style="margin-left:34px"></ui-icon>
  <div class="group">
    <div class="seg">Source</div>
    <div class="seg" style="width:274px">Primary Database<ui-icon name="down" size="20" style="margin-left:9px;color:#8a8a8a"></ui-icon></div>
    <div class="seg" style="width:225px"><span style="color:#a8a8a8">Role</span><span style="color:#333">postgres</span><ui-icon name="down" size="18" style="margin-left:0;color:#a8a8a8"></ui-icon></div>
    <div class="run">Run<ui-icon name="cmd" size="26"></ui-icon><ui-icon name="enter" size="26"></ui-icon></div>
  </div>
</div>`);

// results table, rows come from the data below
const columns = ['oid', 'datname', 'datdba', 'encoding', 'datlocprovider', 'datistemplate', 'datallowconn', 'dathasloginevt', 'datconnlimit', 'datfrozenxid', 'datminmxid', 'dattablespace', 'datcollate', 'datctype', 'datlocale', 'daticurules'];
const rows = [
  [1, 'template1', 10, 6, 'i', 'true', 'true', 'false', -1, 730, 1, 1663, 'en_US.UTF-8', 'en_US.UTF-8', 'en-US', 'NULL'],
  [4, 'template0', 10, 6, 'i', 'true', 'false', 'false', -1, 730, 1, 1663, 'en_US.UTF-8', 'en_US.UTF-8', 'en-US', 'NULL'],
  [5, 'postgres', 16384, 6, 'i', 'false', 'true', 'false', -1, 730, 1, 1663, 'en_US.UTF-8', 'en_US.UTF-8', 'en-US', 'NULL'],
  [17328, 'my_database', 16384, 6, 'i', 'false', 'true', 'false', -1, 730, 1, 1663, 'en_US.UTF-8', 'en_US.UTF-8', 'en-US', 'NULL'],
];

customElements.define('result-grid', class extends HTMLElement {
  constructor() {
    super();
    const cell = (value, name) => `<div class="${name}">${value}</div>`;
    const head = columns.map(c => cell(c, 'head')).join('');
    const body = rows.map(r => r.map(v => cell(v, v === 'NULL' ? 'null' : 'data')).join('')).join('');
    this.attachShadow({ mode: 'open' }).innerHTML = `
    <style>
      :host { display: flex; flex: 1; min-height: 0; background: #f8f8f8; position: relative; }
      .main { flex: none; width: 3201px; border-right: 1px solid #e6e6e6; height: 739px; box-sizing: border-box; border-bottom: 2px solid #ececec; }
      .grid { display: grid; grid-template-columns: repeat(16, 200px); grid-template-rows: 70px repeat(4, 70px); }
      .grid div { box-sizing: border-box; padding: 1px 0 0 17px; border-right: 2px solid #eeeeee; border-bottom: 2px solid #eeeeee; overflow: hidden; white-space: nowrap;
        font: 23.800px/70px "Liberation Mono", monospace; background: #fcfcfc; color: #444; }
      .grid .head { background: #f3f3f3; color: #222; font-weight: bold; border-bottom-width: 3px; }
      .grid .null { color: #9a9a9a; }
      .track { flex: 1; background: #fcfcfc; position: relative; }
      .thumb { position: absolute; left: 7px; top: -76px; width: 16px; height: 68px; border-radius: 8px; background: #c2c2c2; }
      .hbar { position: absolute; left: 7px; top: 746px; width: 2316px; height: 16px; border-radius: 6px; background: #c6c6c6; }
      .below { position: absolute; left: 0; right: 0; top: 739px; bottom: 0; background: #fcfcfc; }
    </style>
    <div class="main"><div class="grid">${head}${body}</div></div>
    <div class="track"><div class="thumb"></div></div>
    <div class="below"></div>
    <div class="hbar"></div>`;
  }
});

define('results-footer', `
<style>
  :host { display: flex; flex: none; box-sizing: border-box; height: 71px; align-items: center; padding: 0 17px 0 17px; border-top: 2px solid #ececec; background: #fcfcfc; font-size: 23px; color: #2b2b2b; white-space: nowrap; }
  .note { color: #7a7a7a; margin-left: 14px; }
  .limit { margin-left: auto; box-sizing: border-box; width: 355px; height: 51px; border: 2px solid #e2e2e2; border-radius: 10px; background: #fff; display: flex; align-items: center; padding-left: 20px; gap: 20px; }
</style>
<span>4 rows</span><span class="note">(Limited to only 100 rows)</span>
<div class="limit">Limit results to: 100 rows<ui-icon name="up" size="20"></ui-icon></div>`);
</script>
</body>
</html>
